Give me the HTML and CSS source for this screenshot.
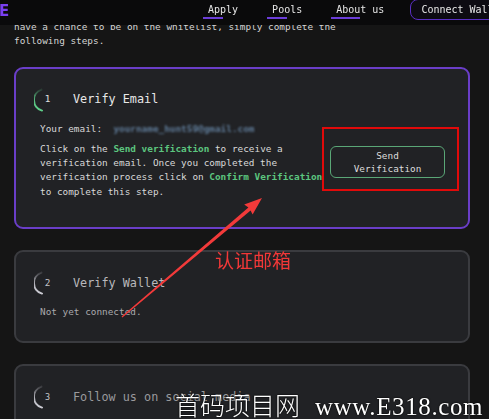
FILE: index.html
```html
<!DOCTYPE html>
<html lang="en">
<head>
<meta charset="utf-8">
<title>Whitelist</title>
<link rel="stylesheet" href="styles.css">
</head>
<body>
<header class="nav">
  <span class="logo">E</span>
  <nav class="links">
    <a class="link">Apply</a>
    <a class="link">Pools</a>
    <a class="link">About us</a>
  </nav>
  <button class="connect">Connect Wallet</button>
</header>

<main class="page">
  <p class="intro">have a chance to be on the whitelist, simply complete the following steps.</p>

  <section class="card card-active">
    <div class="step-head">
      <span class="ring ring-green">
        <svg class="ring-arc" width="22" height="24" viewBox="0 0 22 24">
          <defs>
            <linearGradient id="gGreen" x1="0" y1="0" x2="0" y2="1">
              <stop offset="0" stop-color="#5fd08a" stop-opacity="0.15"/>
              <stop offset="0.5" stop-color="#5fd08a" stop-opacity="0.9"/>
              <stop offset="1" stop-color="#5fd08a" stop-opacity="1"/>
            </linearGradient>
          </defs>
          <path d="M 7.4 1.6 A 11 11 0 0 0 8 22.6" fill="none" stroke="url(#gGreen)" stroke-width="2" stroke-linecap="round"/>
        </svg>
        <span class="ring-num">1</span>
      </span>
      <h2 class="step-title">Verify Email</h2>
    </div>
    <div class="step-body step-body-row">
      <div class="step-text">
        <p class="email-line">Your email:  <span class="email">yourname_hunt59@gmail.com</span></p>
        <p class="step-desc">Click on the <b class="hl">Send verification</b> to receive a verification email. Once you completed the verification process click on <b class="hl">Confirm Verification</b> to complete this step.</p>
      </div>
      <button class="send">Send<br>Verification</button>
    </div>
  </section>

  <section class="card">
    <div class="step-head">
      <span class="ring">
        <svg class="ring-arc" width="22" height="24" viewBox="0 0 22 24">
          <defs>
            <linearGradient id="gGray" x1="0" y1="0" x2="0" y2="1">
              <stop offset="0" stop-color="#d6d6de" stop-opacity="0.15"/>
              <stop offset="0.5" stop-color="#d6d6de" stop-opacity="0.8"/>
              <stop offset="1" stop-color="#d6d6de" stop-opacity="0.95"/>
            </linearGradient>
          </defs>
          <path d="M 7.4 1.6 A 11 11 0 0 0 8 22.6" fill="none" stroke="url(#gGray)" stroke-width="2" stroke-linecap="round"/>
        </svg>
        <span class="ring-num">2</span>
      </span>
      <h2 class="step-title dim">Verify Wallet</h2>
    </div>
    <div class="step-body">
      <p class="muted">Not yet connected.</p>
    </div>
  </section>

  <section class="card">
    <div class="step-head">
      <span class="ring">
        <svg class="ring-arc" width="22" height="24" viewBox="0 0 22 24">
          <path d="M 7.4 1.6 A 11 11 0 0 0 8 22.6" fill="none" stroke="url(#gGray)" stroke-width="2" stroke-linecap="round"/>
        </svg>
        <span class="ring-num small">3</span>
      </span>
      <h2 class="step-title dimmer">Follow us on social media</h2>
    </div>
  </section>
</main>

<svg class="annot" width="489" height="419" viewBox="0 0 489 419">
  <rect x="323" y="128" width="135" height="62" fill="none" stroke="#e10a0a" stroke-width="2"/>
  <polygon fill="#f23a3a" points="121.6,316.6 122.4,317.4 250.6,210.4 252.6,214.6 262,198 244.2,204.6 248.4,207.6"/>
</svg>
<div class="annot-label">认证邮箱</div>
<div class="watermark"><span class="wm-cn">首码项目网</span><span class="wm-en">www.E318.com</span></div>
</body>
</html>
```

FILE: styles.css
```css
* { box-sizing: border-box; }

html, body {
  margin: 0;
  padding: 0;
}

body {
  width: 489px;
  height: 419px;
  overflow: hidden;
  background: #151515;
  color: #d8d8d8;
  font-family: "DejaVu Sans Mono", "Liberation Mono", monospace;
  font-size: 9.4px;
  line-height: 14.3px;
  position: relative;
}

p { margin: 0; }

/* ---------- nav ---------- */
.nav {
  position: fixed;
  top: 0;
  left: 0;
  width: 489px;
  height: 25px;
  background: #0a0a0b;
  display: flex;
  align-items: flex-start;
  z-index: 5;
  white-space: nowrap;
}

.logo {
  width: 10px;
  margin-left: -1px;
  margin-top: 3px;
  font-family: "DejaVu Sans", sans-serif;
  font-weight: 700;
  font-size: 15px;
  line-height: 16px;
  color: #7a3ff0;
}

.links {
  display: flex;
  gap: 24px;
  margin-left: 194px;
}

.link {
  display: block;
  height: 19px;
  padding: 0 5px;
  font-size: 10px;
  line-height: 20px;
  color: #e6e6e6;
  background: linear-gradient(#6b3dd8, #6b3dd8) no-repeat left bottom / 50% 2px;
}

.connect {
  flex: 0 0 auto;
  margin-left: 21px;
  margin-top: -1px;
  height: 21px;
  padding: 0 10px;
  background: #0d0b12;
  border: 1.5px solid #5a2fc4;
  border-radius: 8px;
  color: #e8e8e8;
  font-family: "DejaVu Sans Mono", monospace;
  font-size: 10px;
  line-height: 18px;
}

/* ---------- page ---------- */
.page {
  padding: 20px 0 0 14px;
  width: 470px;
}

.intro {
  width: 340px;
  color: #d4d4d4;
  margin-bottom: 18px;
}

.card {
  width: 456px;
  background: #212225;
  border: 2px solid #3a3b3f;
  border-radius: 9px;
  padding: 20px 23px 22px 24px;
  margin-bottom: 21px;
}

.card-active {
  border-color: #6a3ec8;
}

.step-head {
  display: flex;
  align-items: center;
  height: 22px;
  margin-left: -5px;
  gap: 16px;
}

.ring {
  position: relative;
  width: 22px;
  height: 22px;
  display: flex;
  align-items: center;
  justify-content: center;
  flex: 0 0 22px;
}

.ring-arc {
  position: absolute;
  left: -1px;
  top: -1px;
}

.ring-num {
  position: relative;
  padding-left: 3px;
  font-size: 9.4px;
  color: #e0e0e0;
}

.ring-num.small { font-size: 8.5px; color: #bdbdbd; }

.ring:not(.ring-green) .ring-num { color: #c4c4c8; }

.step-title {
  margin: 0;
  font-size: 11.8px;
  font-weight: 400;
  color: #e8e8e8;
}

.step-title.dim { color: #b9b9bc; }
.step-title.dimmer { color: #9a9a9d; }

.step-body {
  margin-top: 11px;
}

.step-body-row {
  display: flex;
  align-items: center;
}

.step-text {
  flex: 0 0 290px;
}

.email-line {
  margin-bottom: 6px;
  white-space: pre;
}

.email {
  color: #5f7b98;
  font-weight: 700;
  filter: blur(1.3px);
}

.step-desc {
  margin-bottom: 6px;
}

.hl {
  color: #5cc67f;
  font-weight: 700;
}

.send {
  margin-left: auto;
  margin-top: -3px;
  width: 115px;
  height: 32px;
  padding: 0;
  background: transparent;
  border: 1px solid #5aa777;
  border-radius: 6px;
  color: #dcdcdc;
  font-family: "DejaVu Sans Mono", monospace;
  font-size: 9.4px;
  line-height: 13px;
}

.muted {
  color: #a9a9ac;
}

/* ---------- annotation overlay ---------- */
.annot {
  position: absolute;
  left: 0;
  top: 0;
  z-index: 6;
  pointer-events: none;
}

.annot-label {
  position: absolute;
  left: 215px;
  top: 249px;
  z-index: 6;
  font-family: "Noto Sans CJK SC", sans-serif;
  font-size: 19px;
  line-height: 21px;
  color: #f23838;
}

.watermark {
  position: absolute;
  left: 175px;
  top: 389px;
  z-index: 7;
  display: flex;
  align-items: baseline;
  gap: 15px;
  white-space: nowrap;
  color: #ffffff;
  text-shadow: 0 0 2px #000, 0 0 1px #000;
}

.wm-cn {
  font-family: "Noto Sans CJK SC", sans-serif;
  font-weight: 200;
  font-size: 25px;
  line-height: 30px;
}

.wm-en {
  font-family: "Liberation Serif", serif;
  font-size: 25px;
  line-height: 30px;
  letter-spacing: 0.6px;
}
```
